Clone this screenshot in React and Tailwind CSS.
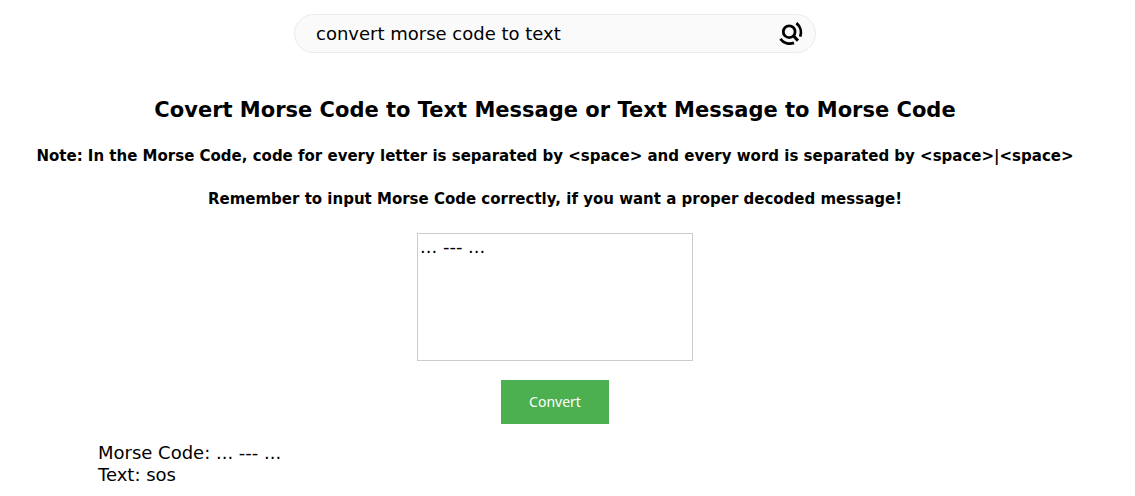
import React, { useState } from "react";

function SearchIcon() {
  return (
    <svg viewBox="0 0 24 24" className="h-6 w-6" fill="none" stroke="#000" strokeWidth="2.8" aria-hidden="true">
      <circle cx="10.2" cy="9.7" r="5.9" />
      <path d="M14.3 13.8 19 18.6" strokeWidth="3" />
      <path d="M17.4 1.2A12 12 0 0 1 21.2 14.6" />
      <path d="M1.4 16.8A12 12 0 0 0 15 20.9" />
    </svg>
  );
}

export default function App() {
  const [query, setQuery] = useState("convert morse code to text");
  const [message, setMessage] = useState("... --- ...");
  return (
    <div className="bg-white px-3 pt-3.5 font-['DejaVu_Sans',sans-serif] text-lg text-black">
      <main className="mx-auto flex w-full flex-col items-center pr-[25px]">
        <form role="search" onSubmit={(e) => e.preventDefault()} className="flex h-[39px] w-full max-w-[522px] items-center rounded-full border border-[#ebebeb] bg-[#fafafa] pr-3 pl-[21px]">
          <input aria-label="Search" value={query} onChange={(e) => setQuery(e.target.value)} className="min-w-0 flex-1 bg-transparent text-lg outline-none" />
          <button type="submit" aria-label="Submit search"><SearchIcon /></button>
        </form>
        <h1 className="mt-[43px] text-center text-[21px] leading-7 font-bold">Covert Morse Code to Text Message or Text Message to Morse Code</h1>
        <p className="mt-[22px] text-center text-[15px] leading-5 font-bold">Note: In the Morse Code, code for every letter is separated by &lt;space&gt; and every word is separated by &lt;space&gt;|&lt;space&gt;</p>
        <p className="mt-[23px] text-center text-[15px] leading-5 font-bold">Remember to input Morse Code correctly, if you want a proper decoded message!</p>
        <textarea aria-label="Message" value={message} onChange={(e) => setMessage(e.target.value)} className="mt-6 h-32 w-[276px] resize-none border border-[#ccc] p-0.5 text-lg leading-[22px] outline-none" />
        <button type="button" className="mt-[19px] h-11 w-[108px] bg-[#4caf50] font-['Noto_Sans',sans-serif] text-sm text-white">Convert</button>
      </main>
      <output className="mt-[18px] block pl-[86px] text-lg leading-[22px]">
        <p>Morse Code: ... --- ...</p>
        <p>Text: sos</p>
      </output>
    </div>
  );
}
